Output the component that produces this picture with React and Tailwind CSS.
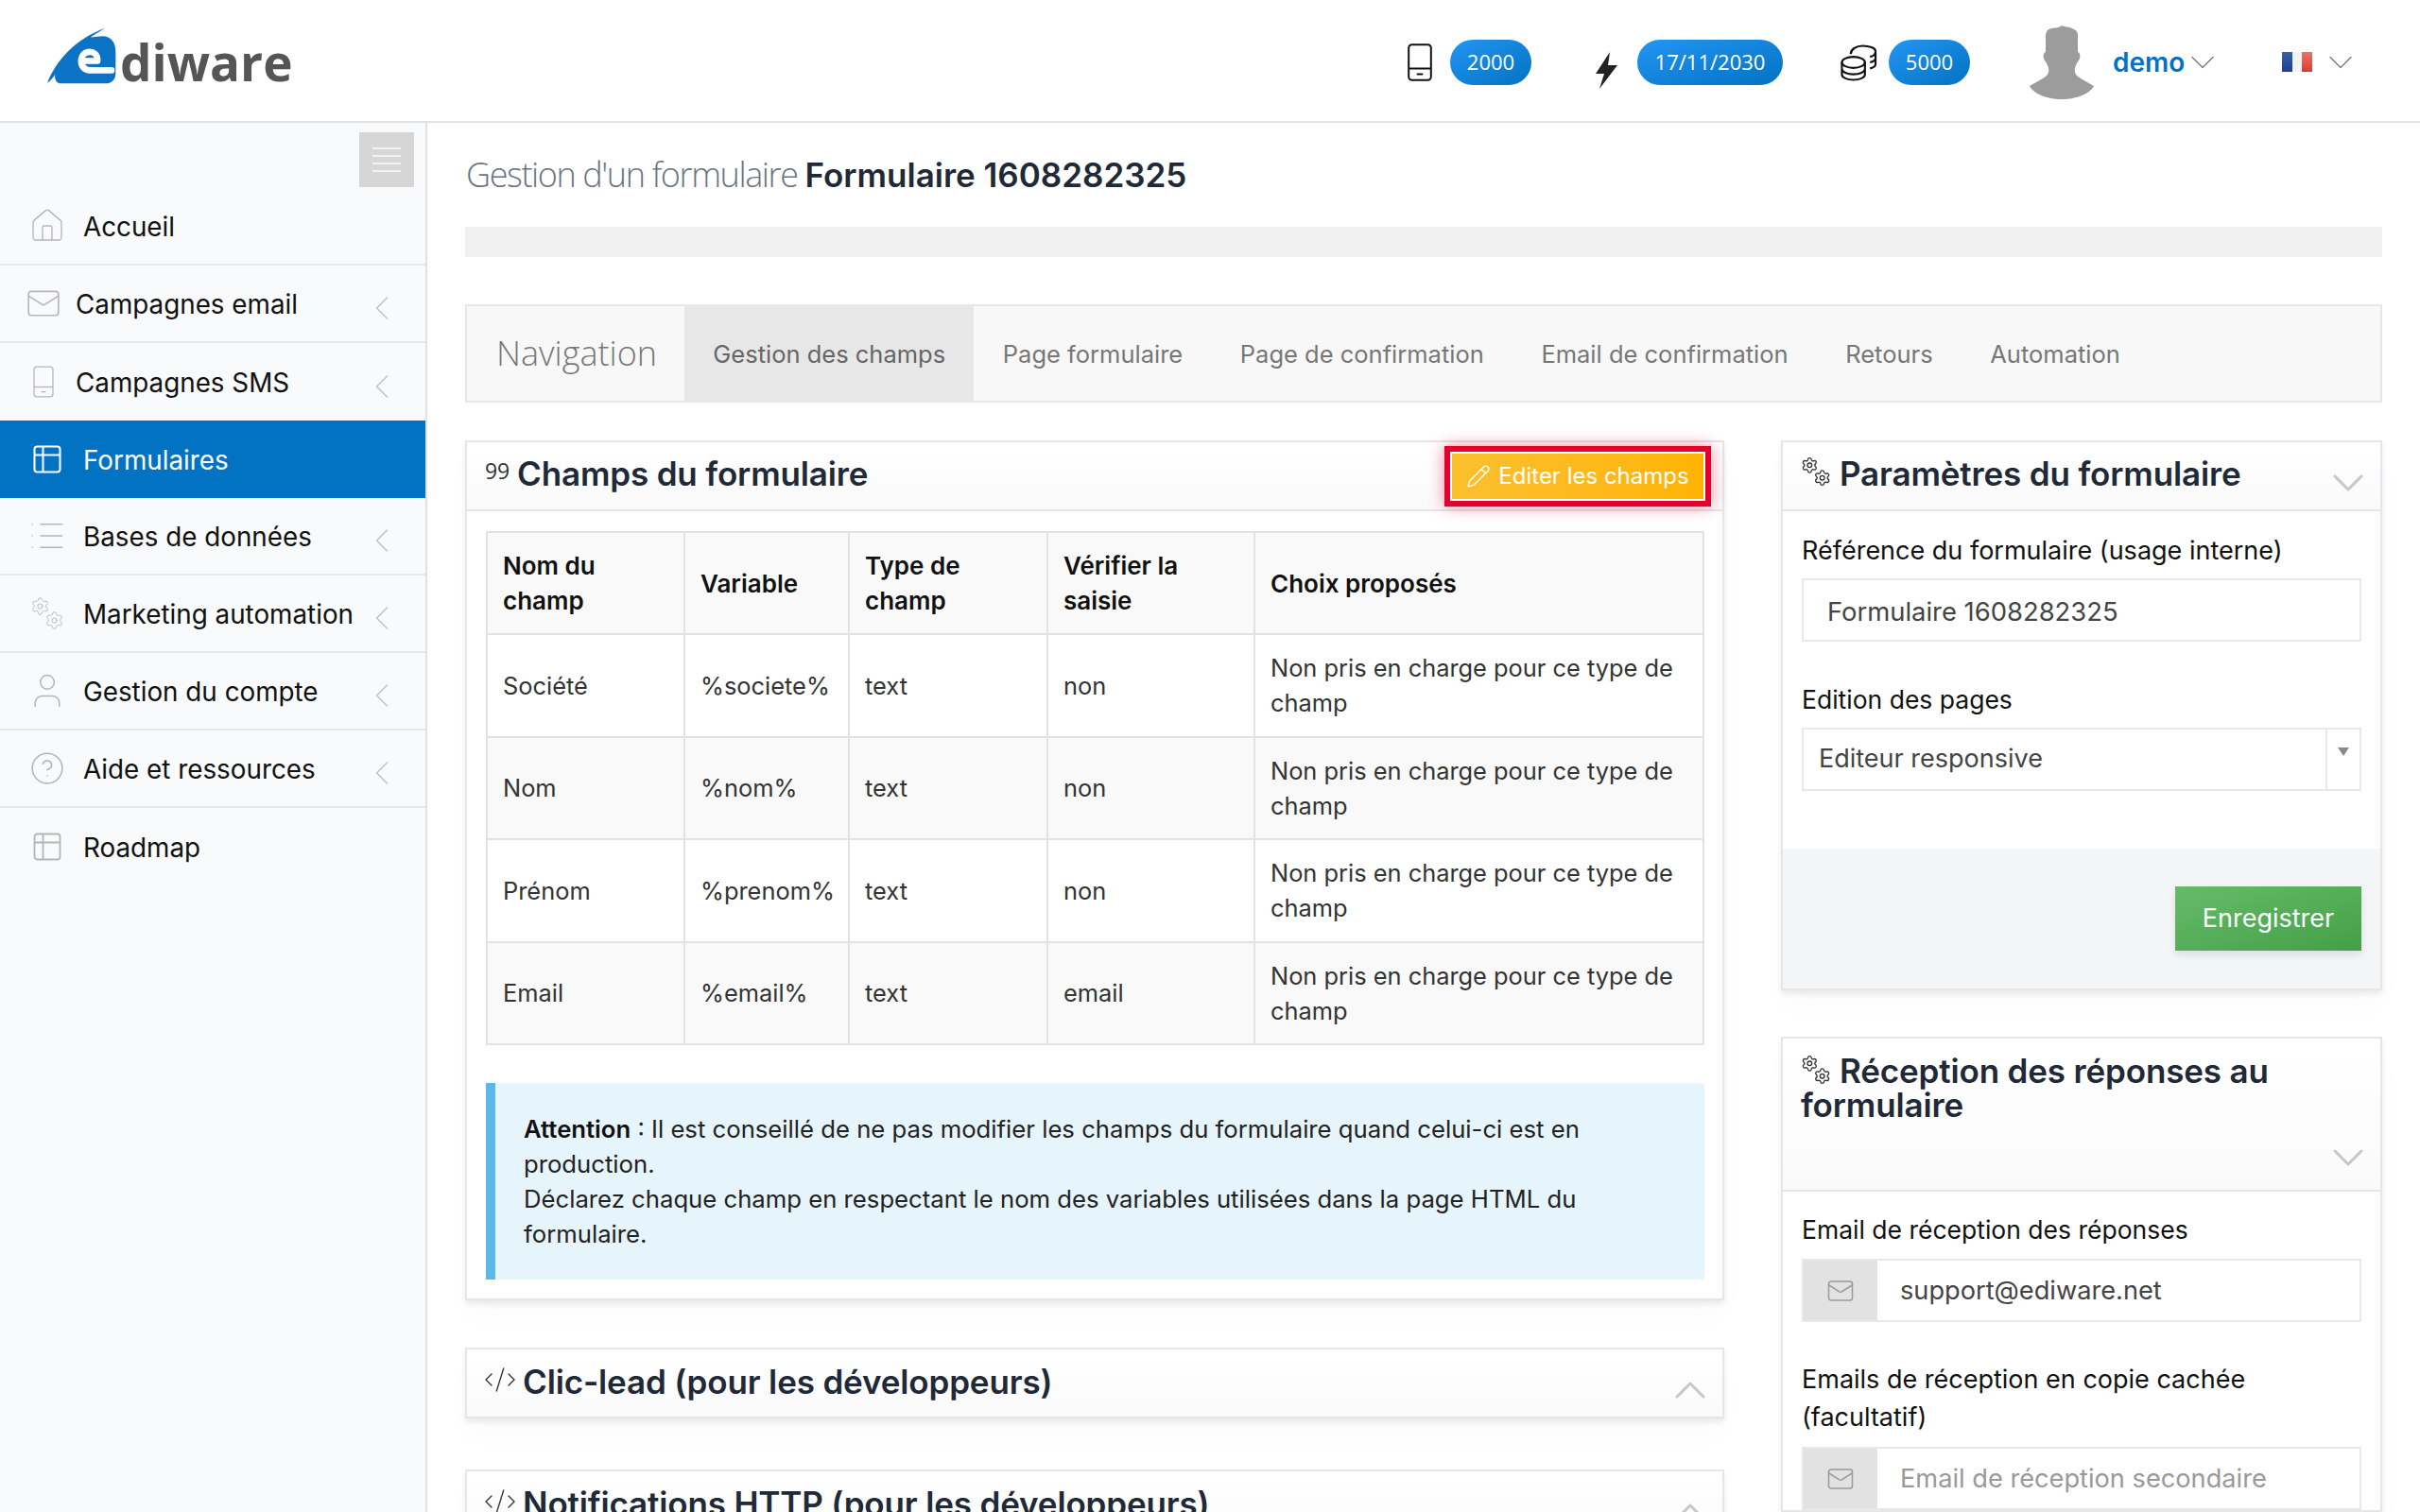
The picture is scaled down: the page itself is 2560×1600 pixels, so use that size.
import {
  ChevronDown,
  ChevronLeft,
  ChevronUp,
  CircleHelp,
  CodeXml,
  House,
  List,
  Mail,
  Pencil,
  Settings,
  Table2,
  User,
} from "lucide-react";

const PhoneIcon = ({ className, strokeWidth = 2 }) => (
  <svg viewBox="0 0 26 40" fill="none" stroke="currentColor" strokeWidth={strokeWidth} className={className}>
    <rect x="1.2" y="1.2" width="23.6" height="37.6" rx="3.5" />
    <path d="M1.2 26.5h23.6" />
    <path d="M10.5 32.5h5" strokeLinecap="round" />
  </svg>
);

const Gears = ({ className, strokeWidth = 1.5 }) => (
  <svg viewBox="0 0 36 36" className={className}>
    <Settings x="0" y="0" width="21" height="21" strokeWidth={strokeWidth} />
    <Settings x="15" y="15" width="21" height="21" strokeWidth={strokeWidth} />
  </svg>
);

const menu = [
  { label: "Accueil", icon: <House className="w-[40px] h-[40px] shrink-0" strokeWidth={0.8} /> },
  { label: "Campagnes email", icon: <Mail className="w-[38px] h-[38px] shrink-0" strokeWidth={1} />, arrow: true, tight: true },
  { label: "Campagnes SMS", icon: <PhoneIcon className="w-[22px] h-[34px]" strokeWidth={1.5} />, arrow: true, tight: true },
  { label: "Formulaires", icon: <Table2 className="w-[36px] h-[36px] shrink-0" strokeWidth={1.4} />, active: true },
  { label: "Bases de données", icon: <List className="w-[42px] h-[42px] shrink-0" strokeWidth={0.8} />, arrow: true },
  { label: "Marketing automation", icon: <Gears className="w-[36px] h-[36px] shrink-0" strokeWidth={1.1} />, arrow: true },
  { label: "Gestion du compte", icon: <User className="w-[44px] h-[44px] shrink-0" strokeWidth={0.8} />, arrow: true },
  { label: "Aide et ressources", icon: <CircleHelp className="w-[38px] h-[38px] shrink-0" strokeWidth={1} />, arrow: true },
  { label: "Roadmap", icon: <Table2 className="w-[36px] h-[36px] shrink-0" strokeWidth={1.2} /> },
];

const tabs = ["Gestion des champs", "Page formulaire", "Page de confirmation", "Email de confirmation", "Retours", "Automation"];

const rows = [
  ["Société", "%societe%", "text", "non"],
  ["Nom", "%nom%", "text", "non"],
  ["Prénom", "%prenom%", "text", "non"],
  ["Email", "%email%", "text", "email"],
];

const Badge = ({ children, className }) => (
  <span className={`flex h-[48px] items-center justify-center rounded-full bg-gradient-to-br from-[#2196f3] to-[#0272c3] text-[22px] text-white font-['Open_Sans',sans-serif] ${className}`}>
    {children}
  </span>
);

const Logo = () => (
  <div className="flex h-[63px] items-start -mt-[10px]">
    <svg viewBox="25 25 230 190" className="w-[77px] h-[63px] shrink-0">
      <path
        fill="#0b72c6"
        d="M30 205C55 140 115 65 215 30C195 42 180 50 168 60L205 56C235 56 248 78 248 105V175C248 195 235 207 215 207H75C60 207 52 195 55 178C48 190 40 198 30 205Z"
      />
      <path
        fill="none"
        stroke="#fff"
        strokeWidth="20"
        strokeLinecap="round"
        d="M190 135H150M190 130C190 115 178 106 165 106C150 106 138 118 138 135C138 155 150 165 170 165H235"
      />
    </svg>
    <span className="ml-[2px] mt-[3px] text-[53px] leading-[70px] font-bold text-[#555555] font-['Open_Sans',sans-serif]">diware</span>
  </div>
);

const Header = () => (
  <header className="flex h-[130px] items-center justify-between border-b-2 border-[#e2e2e2] bg-white pl-[48px] pr-[62px]">
    <Logo />
    <div className="flex items-center pt-[3px]">
      <PhoneIcon className="w-[26px] h-[40px] text-[#111]" />
      <Badge className="ml-[19px] w-[86px]">2000</Badge>
      <svg viewBox="0 0 23 39" className="ml-[68px] mt-[18px] w-[23px] h-[39px] fill-[#222]">
        <path d="M15 0L0 23h9L4 39l19-25h-10z" />
      </svg>
      <Badge className="ml-[21px] w-[154px]">17/11/2030</Badge>
      <svg viewBox="0 0 40 40" fill="none" stroke="#111" strokeWidth="2.2" className="ml-[61px] w-[39px] h-[40px]">
        <ellipse cx="14" cy="20" rx="12.5" ry="6" />
        <path d="M1.5 20v13c0 3.5 5.6 6 12.500 6s12.500-2.500 12.500-6V20M1.500 27c0 3.500 5.600 6 12.500 6s12.500-2.500 12.500-6" />
        <path d="M11 11c0-5 6-9 13-9s14 2.500 14 6-3 5.500-6 6M38 8v14c0 2-2 3.500-6 4.500M38 15c0 2-2 4-6 5" />
      </svg>
      <Badge className="ml-[12px] w-[86px]">5000</Badge>
      <svg viewBox="0 0 68 78" className="ml-[63px] w-[68px] h-[78px] fill-[#9c9c9c]">
        <path d="M34 0c3 2 8 1 11 3 4 2 6 3 6 8v17c3 1 3 6 1 9-2 2-3 5-4 8-1 5 1 8 6 11l14 8C64 72 50 78 34 78S4 72 0 64l14-8c5-3 7-6 6-11-1-3-2-6-4-8-2-3-2-8 1-9V11c0-6 4-8 7-8 3-1 7 0 10-3z" />
      </svg>
      <span className="ml-[20px] w-[75px] text-[28px] font-semibold text-[#0272c3]">demo</span>
      <ChevronDown className="-ml-[2px] w-[44px] h-[44px] text-[#777]" strokeWidth={0.7} />
      <div className="ml-[62px] flex h-[21px] w-[32px]">
        <span className="flex-1 bg-gradient-to-b from-[#3b5fa8] to-[#1d3f8f]" />
        <span className="flex-1 bg-[#f3f3f3]" />
        <span className="flex-1 bg-gradient-to-b from-[#ee7066] to-[#d93a30]" />
      </div>
      <ChevronDown className="ml-[8px] w-[44px] h-[44px] text-[#777]" strokeWidth={0.7} />
    </div>
  </header>
);

const Sidebar = () => (
  <aside className="w-[452px] shrink-0 border-r-2 border-[#e2e2e2] bg-[#f9fafb]">
    <div className="flex justify-end pt-[10px] pr-[12px]">
      <div className="flex h-[58px] w-[58px] flex-col items-center justify-center gap-[6px] bg-[#d6d6d6]">
        <span className="h-[2px] w-[30px] bg-[#f2f2f2]" />
        <span className="h-[2px] w-[30px] bg-[#f2f2f2]" />
        <span className="h-[2px] w-[30px] bg-[#f2f2f2]" />
        <span className="h-[2px] w-[30px] bg-[#f2f2f2]" />
      </div>
    </div>
    <nav className="mt-[1px]">
      {menu.map((item, i) => (
        <div
          key={item.label}
          className={`flex h-[82px] items-center pr-[24px] text-[27.8px] ${
            item.active ? "bg-[#0272c3] text-white" : "text-[#111]"
          } ${item.tight ? "pl-[29px]" : "pl-[33px]"} ${
            i < menu.length - 1 && !item.active && !menu[i + 1].active ? "border-b-2 border-[#e5e7eb]" : ""
          }`}
        >
          <span
            className={`flex h-[34px] w-[34px] items-center justify-center ${item.tight ? "mr-[17px]" : "mr-[21px]"} ${
              item.active ? "text-white" : "text-[#b5b5b5]"
            }`}
          >
            {item.icon}
          </span>
          <span className="flex-1 whitespace-nowrap pt-[3px]">{item.label}</span>
          {item.arrow && <ChevronLeft className="mt-[6px] w-[44px] h-[48px] shrink-0 -my-[4px] text-[#c4c4c4]" strokeWidth={0.9} />}
        </div>
      ))}
    </nav>
  </aside>
);

const Panel = ({ className = "", children }) => (
  <section className={`border-2 border-[#e4e6e9] bg-white shadow-[0_4px_6px_rgba(0,0,0,0.08),0_20px_30px_rgba(0,0,0,0.015)] ${className}`}>
    {children}
  </section>
);

const PanelTitle = ({ icon, children, className = "" }) => (
  <h2 className={`flex items-center text-[35px] leading-[36px] font-semibold tracking-[-0.15px] text-[#1f2937] ${className}`}>
    {icon}
    {children}
  </h2>
);

const FieldsPanel = () => (
  <Panel>
    <div className="flex h-[73px] items-center justify-between border-b-2 border-[#e4e6e9] bg-gradient-to-b from-white to-[#fafafb] pl-[19px] pr-[12px]">
      <PanelTitle
        className="-mt-[5px]"
        icon={<span className="mr-[8px] -mt-[6px] text-[23px] leading-none font-normal text-[#333] font-['Open_Sans',sans-serif]">99</span>}
      >
        Champs du formulaire
      </PanelTitle>
      <button className="flex h-[64px] w-[282px] items-center justify-center gap-[8px] border-[6px] border-[#e4002b] bg-gradient-to-r from-[#fbc02d] to-[#ffb300] text-[24px] text-white shadow-[0_0_16px_rgba(228,0,43,0.45),inset_0_0_0_2px_#fff]">
        <Pencil className="w-[26px] h-[26px]" strokeWidth={1.3} />
        Editer les champs
      </button>
    </div>
    <div className="pl-[20px] pr-[19px] pt-[21px] pb-[20px]">
      <table className="w-full table-fixed border-collapse text-[25.4px] leading-[37px] text-[#333]">
        <colgroup>
          <col className="w-[209px]" />
          <col className="w-[174px]" />
          <col className="w-[210px]" />
          <col className="w-[219px]" />
          <col />
        </colgroup>
        <thead>
          <tr className="h-[108px] bg-[#f9f9f9] text-left text-[26px] text-[#111]">
            {["Nom du champ", "Variable", "Type de champ", "Vérifier la saisie", "Choix proposés"].map((h) => (
              <th key={h} className="border-2 border-[#e2e2e2] px-[16px] font-semibold">{h}</th>
            ))}
          </tr>
        </thead>
        <tbody>
          {rows.map((row, i) => (
            <tr key={row[0]} className={`h-[108.500px] ${i % 2 ? "bg-[#f9f9f9]" : "bg-white"}`}>
              {row.map((cell, j) => (
                <td key={j} className="border-2 border-[#e2e2e2] px-[16px]">{cell}</td>
              ))}
              <td className="border-2 border-[#e2e2e2] px-[16px]">Non pris en charge pour ce type de champ</td>
            </tr>
          ))}
        </tbody>
      </table>
      <div className="mt-[40px] flex h-[208px] items-center border-l-[10px] border-[#5bb8e8] bg-[#e6f4fb] pl-[30px] pr-[100px] text-[25.7px] leading-[37px] text-[#222]">
        <p>
          <strong className="font-semibold text-[#111]">Attention</strong> : Il est conseillé de ne pas modifier les champs du formulaire quand celui-ci est en production.
          <br />
          Déclarez chaque champ en respectant le nom des variables utilisées dans la page HTML du formulaire.
        </p>
      </div>
    </div>
  </Panel>
);

const DevPanel = ({ title, className = "" }) => (
  <Panel className={className}>
    <div className="flex h-[71px] items-center justify-between bg-gradient-to-b from-white to-[#fafafb] pl-[17px] pr-[6px]">
      <PanelTitle
        className="-mt-[4px]"
        icon={<CodeXml className="mr-[6px] w-[36px] h-[36px] -mt-[4px] text-[#333]" strokeWidth={0.9} />}
      >
        {title}
      </PanelTitle>
      <ChevronUp className="mt-[8px] -my-[6px] w-[56px] h-[56px] text-[#c8c8c8]" strokeWidth={1.3} />
    </div>
  </Panel>
);

const EmailField = ({ value, placeholder }) => (
  <div className="flex h-[67px] border-2 border-[#e8e8e8]">
    <div className="flex w-[78px] items-center justify-center bg-[#e2e2e2]">
      <Mail className="w-[30px] h-[30px] text-[#9a9a9a]" strokeWidth={1.2} />
    </div>
    <input
      readOnly
      value={value}
      placeholder={placeholder}
      className="min-w-0 flex-1 bg-white pl-[24px] pt-[2px] text-[27.200px] text-[#444] outline-none placeholder:text-[#999]"
    />
  </div>
);

const SettingsPanel = () => (
  <Panel>
    <div className="flex h-[73px] items-center justify-between border-b-2 border-[#e4e6e9] bg-gradient-to-b from-white to-[#fafafb] pl-[19px] pr-[6px]">
      <PanelTitle
        className="-mt-[5px]"
        icon={<Gears className="mr-[9px] -mt-[4px] w-[32px] h-[32px] text-[#333]" strokeWidth={1.7} />}
      >
        Paramètres du formulaire
      </PanelTitle>
      <ChevronDown className="mt-[6px] -my-[8px] w-[56px] h-[56px] text-[#c8c8c8]" strokeWidth={1.3} />
    </div>
    <div className="px-[20px] pt-[23px] pb-[61px] text-[27px] text-[#111]">
      <label className="block leading-[37px]">Référence du formulaire (usage interne)</label>
      <input
        readOnly
        value="Formulaire 1608282325"
        className="mt-[11px] block h-[67px] w-full border-2 border-[#e8e8e8] px-[25px] pt-[3px] text-[27.4px] text-[#444] outline-none"
      />
      <label className="mt-[43px] block leading-[37px] text-[26.5px]">Edition des pages</label>
      <div className="mt-[11px] flex h-[67px] border-2 border-[#e8e8e8]">
        <span className="flex flex-1 items-center pl-[16px] text-[#444]">Editeur responsive</span>
        <span className="flex w-[36px] justify-center border-l-2 border-[#e8e8e8] pt-[19px]">
          <span className="h-0 w-0 border-x-[6px] border-t-[9px] border-x-transparent border-t-[#888]" />
        </span>
      </div>
    </div>
    <div className="flex h-[148px] items-start justify-end bg-[#f4f5f6] px-[20px] pt-[40px]">
      <button className="h-[68px] w-[197px] bg-gradient-to-br from-[#66bb6a] to-[#43a047] text-[27px] text-white shadow-[0_4px_8px_rgba(0,0,0,0.1)]">
        Enregistrer
      </button>
    </div>
  </Panel>
);

const ReceptionPanel = () => (
  <Panel className="mt-[49px]">
    <div className="h-[162px] border-b-2 border-[#e4e6e9] bg-gradient-to-b from-white to-[#fafafb] pl-[19px] pr-[6px] pt-[16px]">
      <h2 className="text-[35px] leading-[36px] font-semibold tracking-[-0.15px] text-[#1f2937]">
        <Gears className="inline-block mr-[9px] -mt-[8px] w-[32px] h-[32px] text-[#333]" strokeWidth={1.7} />
        Réception des réponses au formulaire
      </h2>
      <div className="flex justify-end">
        <ChevronDown className="mt-[10px] w-[56px] h-[56px] text-[#c8c8c8]" strokeWidth={1.3} />
      </div>
    </div>
    <div className="px-[20px] pt-[22px] text-[26.5px] text-[#111]">
      <label className="block leading-[37px]">Email de réception des réponses</label>
      <div className="mt-[12px]">
        <EmailField value="support@ediware.net" />
      </div>
      <label className="mt-[41px] block leading-[40px] text-[27px]">Emails de réception en copie cachée (facultatif)</label>
      <div className="mt-[11px]">
        <EmailField value="" placeholder="Email de réception secondaire" />
      </div>
    </div>
  </Panel>
);

const App = () => {
  return (
    <div className="flex h-[1600px] flex-col overflow-hidden bg-white font-['Inter',sans-serif]">
      <Header />
      <div className="flex min-h-0 flex-1">
        <Sidebar />
        <main className="min-w-0 flex-1 pl-[40px] pr-[40px] pt-[33px]">
          <h1 className="pl-[1px] text-[35px] leading-[44px] text-[#1f2937]">
            <span className="text-[36px] font-light tracking-[-1.4px] text-[#6b7280] font-['Open_Sans',sans-serif]">Gestion d'un formulaire </span>
            <span className="font-semibold">Formulaire 1608282325</span>
          </h1>
          <div className="mt-[33px] h-[32px] bg-[#f0f0f0]" />
          <div className="mt-[50px] flex h-[104px] items-stretch border-2 border-[#e7e7e7] bg-[#f8f8f8] text-[25.5px] text-[#777]">
            <span className="flex w-[230px] items-center pl-[31px] text-[36px] font-light font-['Open_Sans',sans-serif]">Navigation</span>
            {tabs.map((tab, i) => (
              <span key={tab} className={`flex items-center px-[30.300px] pt-[2px] ${i === 0 ? "bg-[#e7e7e7] text-[#666]" : ""}`}>{tab}</span>
            ))}
          </div>
          <div className="mt-[40px] grid grid-cols-[1332px_636px] gap-[60px] items-start">
            <div>
              <FieldsPanel />
              <DevPanel title="Clic-lead (pour les développeurs)" className="mt-[50px]" />
              <DevPanel title="Notifications HTTP (pour les développeurs)" className="mt-[54px]" />
            </div>
            <div>
              <SettingsPanel />
              <ReceptionPanel />
            </div>
          </div>
        </main>
      </div>
    </div>
  );
};

export default App;
